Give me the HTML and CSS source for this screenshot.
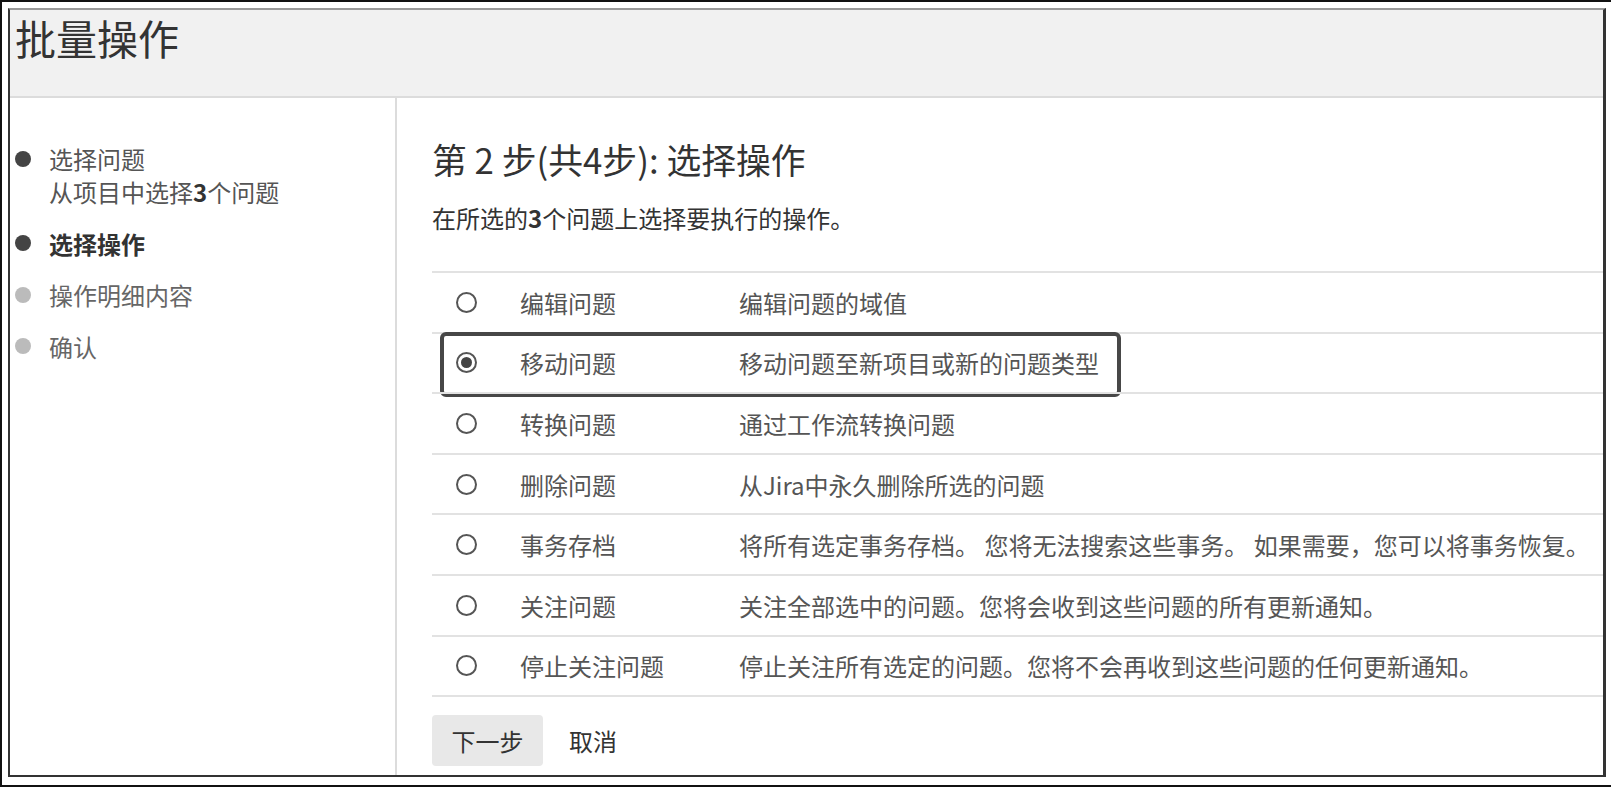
FILE: index.html
```html
<!DOCTYPE html>
<html lang="zh-CN">
<head>
  <meta charset="UTF-8">
  <title>批量操作</title>
  <link rel="stylesheet" href="styles.css">
</head>
<body>
  <div class="page">
    <div class="frame">
      <div class="header">
        <h1>批量操作</h1>
      </div>

      <div class="content">
        <div class="sidebar">
          <div class="step done">
            <span class="dot"></span>
            <div class="step-text">选择问题<br>从项目中选择<b>3</b>个问题</div>
          </div>
          <div class="step current">
            <span class="dot"></span>
            <div class="step-text">选择操作</div>
          </div>
          <div class="step">
            <span class="dot"></span>
            <div class="step-text">操作明细内容</div>
          </div>
          <div class="step">
            <span class="dot"></span>
            <div class="step-text">确认</div>
          </div>
        </div>

        <div class="main">
          <h2>第 2 步(共4步): 选择操作</h2>
          <p class="intro">在所选的<b>3</b>个问题上选择要执行的操作。</p>

          <div class="ops">
            <div class="op"><span class="radio"></span><span>编辑问题</span><span>编辑问题的域值</span></div>
            <div class="op selected"><span class="radio checked"></span><span>移动问题</span><span>移动问题至新项目或新的问题类型</span></div>
            <div class="op"><span class="radio"></span><span>转换问题</span><span>通过工作流转换问题</span></div>
            <div class="op"><span class="radio"></span><span>删除问题</span><span>从Jira中永久删除所选的问题</span></div>
            <div class="op"><span class="radio"></span><span>事务存档</span><span>将所有选定事务存档。 您将无法搜索这些事务。 如果需要，您可以将事务恢复。</span></div>
            <div class="op"><span class="radio"></span><span>关注问题</span><span>关注全部选中的问题。您将会收到这些问题的所有更新通知。</span></div>
            <div class="op"><span class="radio"></span><span>停止关注问题</span><span>停止关注所有选定的问题。您将不会再收到这些问题的任何更新通知。</span></div>
          </div>

          <div class="actions">
            <button class="btn">下一步</button>
            <a class="cancel" href="#">取消</a>
          </div>
        </div>
      </div>
    </div>
  </div>
</body>
</html>
```

FILE: styles.css
```css
* {
  box-sizing: border-box;
}

body {
  margin: 0;
  font-family: "Noto Sans CJK SC", "Noto Sans", sans-serif;
  background: #fff;
  color: #333;
}

/* outer screenshot frame */
.page {
  width: 1611px;
  height: 787px;
  border-top: 2px solid #111;
  border-left: 2px solid #111;
  border-bottom: 2px solid #111;
  padding: 6px 0 0 6px;
}

.frame {
  width: 1598px;
  height: 769px;
  border-top: 2px solid #999;
  border-left: 2px solid #333;
  border-right: 3px solid #333;
  border-bottom: 2px solid #333;
  display: flex;
  flex-direction: column;
}

/* Header */
.header {
  height: 88px;
  background: #f1f1f1;
  border-bottom: 2px solid #dcdcdc;
  padding: 2px 5px 0;
}

.header h1 {
  margin: 0;
  font-size: 41px;
  line-height: 50px;
  font-weight: normal;
  color: #333;
}

.content {
  flex: 1;
  display: flex;
  min-height: 0;
}

/* Sidebar steps */
.sidebar {
  width: 387px;
  border-right: 2px solid #dcdcdc;
  padding: 44px 0 0 5px;
  display: flex;
  flex-direction: column;
  gap: 18.5px;
}

.step {
  display: flex;
  gap: 18px;
  font-size: 24px;
  line-height: 33px;
  color: #666;
}

.step .dot {
  width: 16px;
  height: 16px;
  border-radius: 50%;
  background: #bbb;
  margin-top: 8.5px;
  flex-shrink: 0;
}

.step.done .dot,
.step.current .dot {
  background: #444;
}

.step.done {
  color: #555;
}

.step.current {
  color: #333;
  font-weight: bold;
}

.step-text b {
  color: #333;
}

/* Main */
.main {
  flex: 1;
  padding: 41px 0 0 35px;
}

.main h2 {
  margin: 0;
  font-size: 34.8px;
  line-height: 40px;
  font-weight: normal;
  color: #333;
}

.intro {
  margin: 23px 0 0;
  font-size: 24px;
  line-height: 32px;
  color: #333;
}

.ops {
  margin-top: 37px;
  border-bottom: 2px solid #e2e2e2;
}

.op {
  display: grid;
  grid-template-columns: 88px 219px 1fr;
  align-items: center;
  height: 60.6px;
  border-top: 2px solid #e2e2e2;
  font-size: 24px;
  color: #555;
  white-space: nowrap;
  position: relative;
}

.radio {
  width: 21px;
  height: 21px;
  margin-left: 24px;
  border: 2px solid #555;
  border-radius: 50%;
  display: flex;
  align-items: center;
  justify-content: center;
}

.radio.checked::before {
  content: "";
  width: 11px;
  height: 11px;
  border-radius: 50%;
  background: #444;
}

/* annotation box round the chosen row */
.op.selected::after {
  content: "";
  position: absolute;
  top: -2px;
  left: 8px;
  width: 673px;
  height: 57px;
  border: 4px solid #474747;
  border-radius: 6px;
}

.actions {
  margin-top: 18px;
  display: flex;
  align-items: center;
}

.btn {
  height: 51px;
  padding: 0 19.5px;
  border: none;
  border-radius: 4px;
  background: #e8e8e8;
  font-family: inherit;
  font-size: 24px;
  color: #333;
}

.cancel {
  margin-left: 26px;
  font-size: 24px;
  color: #333;
  text-decoration: none;
}
```
